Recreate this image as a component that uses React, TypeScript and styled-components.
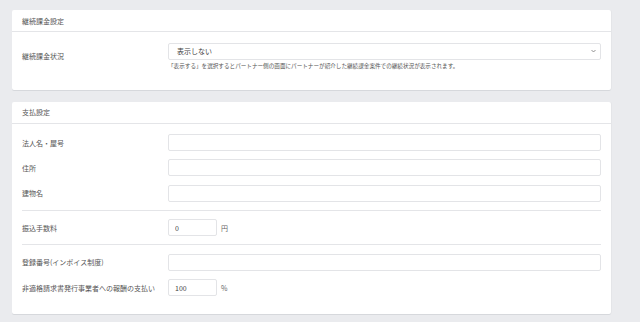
import styled, { createGlobalStyle } from "styled-components";

const GlobalStyle = createGlobalStyle`
  html, body {
    margin: 0;
    padding: 0;
    background: #eaebee;
    font-family: "Noto Sans CJK JP", "Noto Sans", sans-serif;
    color: #555;
  }
`;

const Page = styled.div`
  padding: 10px 29px 10px 12px;
  display: flex;
  flex-direction: column;
  gap: 12px;
`;

const Card = styled.section`
  background: #fff;
  border-radius: 2px;
  box-shadow: 0 1px 0 #d6d8dc, 1px 0 0 #e4e5e8;
`;

const CardHeader = styled.div`
  height: 21px;
  display: flex;
  align-items: center;
  padding: 0 10px;
  font-size: 7px;
  border-bottom: 1px solid #e4e5e8;
`;

const CardBody = styled.div<{ $bottom: number }>`
  padding: 10.5px 10px ${(p) => p.$bottom}px 10px;
  display: flex;
  flex-direction: column;
  gap: 8.3px;
`;

const Row = styled.div`
  display: grid;
  grid-template-columns: 146px 1fr;
  align-items: center;
`;

const Label = styled.div`
  font-size: 7px;
  color: #555;
`;

const Field = styled.div`
  display: flex;
  align-items: center;
  gap: 4px;
`;

const Input = styled.input<{ $width?: number }>`
  box-sizing: border-box;
  height: 17px;
  width: ${(p) => (p.$width ? `${p.$width}px` : "100%")};
  border: 1px solid #e3e4e7;
  border-radius: 2px;
  padding: 0 6px;
  font-family: inherit;
  font-size: 7px;
  color: #444;
  outline: none;
  background: #fff;
`;

const Unit = styled.span`
  font-size: 7px;
  color: #666;
`;

const SelectBox = styled.div`
  box-sizing: border-box;
  height: 17px;
  border: 1px solid #e3e4e7;
  border-radius: 2px;
  padding: 0 4px 0 8px;
  display: flex;
  align-items: center;
  justify-content: space-between;
  font-size: 7px;
  color: #444;
`;

const Help = styled.div`
  font-size: 5.6px;
  color: #555;
  margin-top: 2px;
  white-space: nowrap;
`;

const Divider = styled.hr`
  border: none;
  border-top: 1px solid #e4e5e8;
  margin: 0;
`;

const Chevron = () => (
  <svg width="5" height="4" viewBox="0 0 5 4">
    <path d="M0.5 1 L2.5 3 L4.5 1" fill="none" stroke="#777" strokeWidth="0.8" />
  </svg>
);

export default function App() {
  return (
    <>
      <GlobalStyle />
      <Page>
        <Card>
          <CardHeader>継続課金設定</CardHeader>
          <CardBody $bottom={20}>
            <Row>
              <Label>継続課金状況</Label>
              <div>
                <SelectBox>
                  <span>表示しない</span>
                  <Chevron />
                </SelectBox>
                <Help>
                  「表示する」を選択するとパートナー側の画面にパートナーが紹介した継続課金案件での継続状況が表示されます。
                </Help>
              </div>
            </Row>
          </CardBody>
        </Card>
        <Card>
          <CardHeader>支払設定</CardHeader>
          <CardBody $bottom={18}>
            <Row>
              <Label>法人名・屋号</Label>
              <Input />
            </Row>
            <Row>
              <Label>住所</Label>
              <Input />
            </Row>
            <Row>
              <Label>建物名</Label>
              <Input />
            </Row>
            <Divider />
            <Row>
              <Label>振込手数料</Label>
              <Field>
                <Input $width={49} defaultValue="0" />
                <Unit>円</Unit>
              </Field>
            </Row>
            <Divider />
            <Row>
              <Label>登録番号(インボイス制度)</Label>
              <Input />
            </Row>
            <Row>
              <Label>非適格請求書発行事業者への報酬の支払い</Label>
              <Field>
                <Input $width={49} defaultValue="100" />
                <Unit>%</Unit>
              </Field>
            </Row>
          </CardBody>
        </Card>
      </Page>
    </>
  );
}
